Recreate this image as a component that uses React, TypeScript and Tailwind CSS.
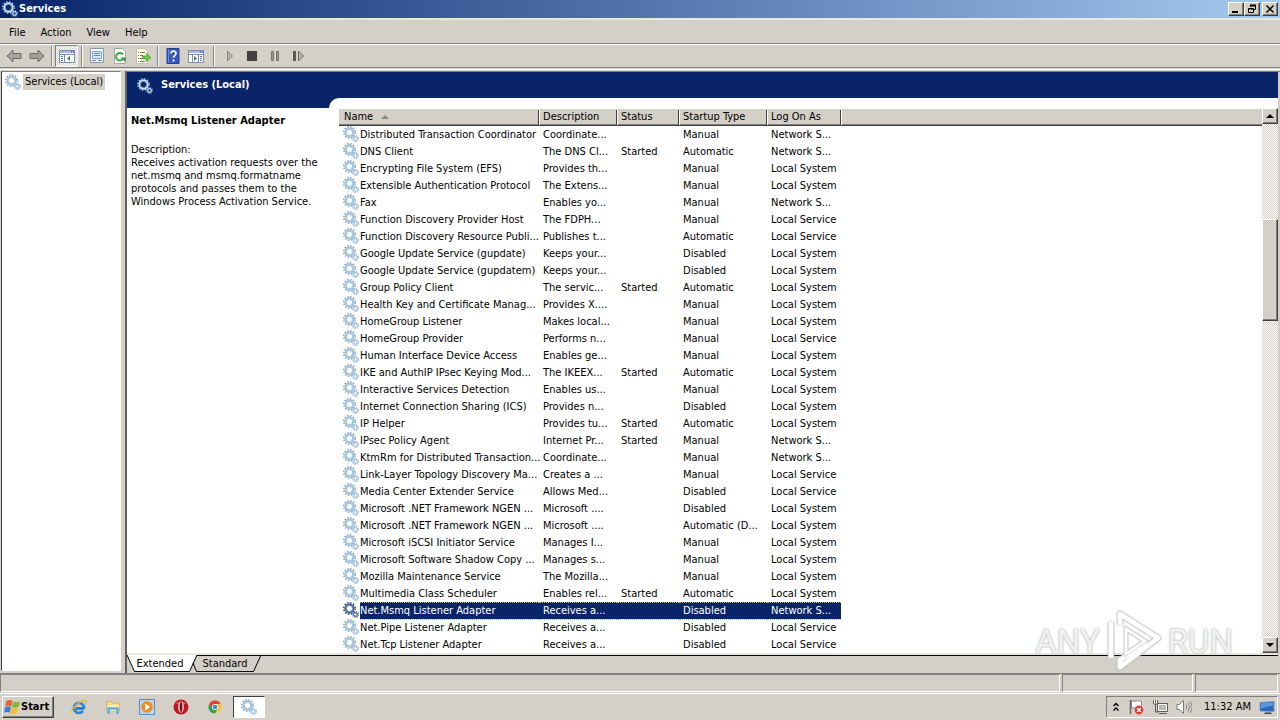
import type { ReactNode } from "react";

type Service = [name: string, description: string, status: string, startup: string, logOn: string];

const SYSTEM = "Local System";
const LOCAL = "Local Service";
const NETWORK = "Network S...";

const services: Service[] = [
  ["Distributed Transaction Coordinator", "Coordinate...", "", "Manual", NETWORK],
  ["DNS Client", "The DNS Cl...", "Started", "Automatic", NETWORK],
  ["Encrypting File System (EFS)", "Provides th...", "", "Manual", SYSTEM],
  ["Extensible Authentication Protocol", "The Extens...", "", "Manual", SYSTEM],
  ["Fax", "Enables yo...", "", "Manual", NETWORK],
  ["Function Discovery Provider Host", "The FDPH...", "", "Manual", LOCAL],
  ["Function Discovery Resource Publi...", "Publishes t...", "", "Automatic", LOCAL],
  ["Google Update Service (gupdate)", "Keeps your...", "", "Disabled", SYSTEM],
  ["Google Update Service (gupdatem)", "Keeps your...", "", "Disabled", SYSTEM],
  ["Group Policy Client", "The servic...", "Started", "Automatic", SYSTEM],
  ["Health Key and Certificate Manag...", "Provides X....", "", "Manual", SYSTEM],
  ["HomeGroup Listener", "Makes local...", "", "Manual", SYSTEM],
  ["HomeGroup Provider", "Performs n...", "", "Manual", LOCAL],
  ["Human Interface Device Access", "Enables ge...", "", "Manual", SYSTEM],
  ["IKE and AuthIP IPsec Keying Mod...", "The IKEEX...", "Started", "Automatic", SYSTEM],
  ["Interactive Services Detection", "Enables us...", "", "Manual", SYSTEM],
  ["Internet Connection Sharing (ICS)", "Provides n...", "", "Disabled", SYSTEM],
  ["IP Helper", "Provides tu...", "Started", "Automatic", SYSTEM],
  ["IPsec Policy Agent", "Internet Pr...", "Started", "Manual", NETWORK],
  ["KtmRm for Distributed Transaction...", "Coordinate...", "", "Manual", NETWORK],
  ["Link-Layer Topology Discovery Ma...", "Creates a ...", "", "Manual", LOCAL],
  ["Media Center Extender Service", "Allows Med...", "", "Disabled", LOCAL],
  ["Microsoft .NET Framework NGEN ...", "Microsoft ....", "", "Disabled", SYSTEM],
  ["Microsoft .NET Framework NGEN ...", "Microsoft ....", "", "Automatic (D...", SYSTEM],
  ["Microsoft iSCSI Initiator Service", "Manages I...", "", "Manual", SYSTEM],
  ["Microsoft Software Shadow Copy ...", "Manages s...", "", "Manual", SYSTEM],
  ["Mozilla Maintenance Service", "The Mozilla...", "", "Manual", SYSTEM],
  ["Multimedia Class Scheduler", "Enables rel...", "Started", "Automatic", SYSTEM],
  ["Net.Msmq Listener Adapter", "Receives a...", "", "Disabled", NETWORK],
  ["Net.Pipe Listener Adapter", "Receives a...", "", "Disabled", LOCAL],
  ["Net.Tcp Listener Adapter", "Receives a...", "", "Disabled", LOCAL],
];

const selected = "Net.Msmq Listener Adapter";

const raised = "border border-t-white border-l-white border-r-[#404040] border-b-[#404040] bg-[#d4d0c8] shadow-[inset_-1px_-1px_0_#808080]";
const sunken = "border border-t-[#808080] border-l-[#808080] border-r-white border-b-white";
const dither = "bg-[repeating-conic-gradient(#ffffff_0_25%,#d4d0c8_0_50%)] bg-[length:2px_2px]";

const Gears = ({ ring = "#a8c5de", edge = "#7ba4c6" }: { ring?: string; edge?: string }) => (
  <svg width="16" height="16" viewBox="0 0 16 16" fill="none" className="shrink-0">
    <circle cx="6.5" cy="6.5" r="5.7" stroke={edge} strokeWidth="1.6" strokeDasharray="1.4 1.58" />
    <circle cx="6.5" cy="6.5" r="4.2" stroke={ring} strokeWidth="2" />
    <circle cx="6.5" cy="6.5" r="3.1" stroke={edge} strokeWidth="0.6" />
    <circle cx="12.5" cy="12.5" r="2.8" stroke={edge} strokeWidth="1.2" strokeDasharray="1.1 1.1" />
    <circle cx="12.5" cy="12.5" r="1.8" stroke={ring} strokeWidth="1.3" />
  </svg>
);

const Icon = ({ children }: { children: ReactNode }) => (
  <svg width="16" height="16" viewBox="0 0 16 16" fill="none" className="shrink-0">
    {children}
  </svg>
);

const ToolButton = ({ label, pressed, children }: { label: string; pressed?: boolean; children: ReactNode }) => (
  <button
    aria-label={label}
    className={`flex h-[22px] w-[23px] items-center justify-center ${pressed ? `${sunken} ${dither}` : ""}`}
  >
    <Icon>{children}</Icon>
  </button>
);

const Divider = () => (
  <div className="flex w-[7px] justify-center">
    <div className="h-5 w-0.5 border-l border-l-[#808080] border-r border-r-white" />
  </div>
);

const ARROW = "M1 8 L7 2 V5.5 H15 V10.5 H7 V14 Z";

const Toolbar = () => (
  <div className="flex h-6 items-center border-t border-t-white border-b border-b-[#808080] pl-0.5">
    <ToolButton label="Back">
      <path d={ARROW} fill="#a3a19c" stroke="#6b6a67" />
    </ToolButton>
    <ToolButton label="Forward">
      <path d={ARROW} fill="#a3a19c" stroke="#6b6a67" transform="rotate(180 8 8)" />
    </ToolButton>
    <Divider />
    <ToolButton label="Show or hide console tree" pressed>
      <path d="M0.5 2.5h15v12h-15z" fill="#fff" stroke="#7d8dab" />
      <path d="M1 3h14v2H1z" fill="#a9bbdc" />
      <path d="M12 4h1M14 4h1" stroke="#1d3d85" />
      <path d="M0.5 6.5h15M5.5 7v8" stroke="#7d8dab" />
      <path d="M2 8.5h2M2 10.5h2M2 12.5h2" stroke="#4c78c0" />
      <path d="M11 8v5l-3-2.5z" fill="#2f9a2f" />
    </ToolButton>
    <Divider />
    <ToolButton label="Properties">
      <path d="M1.5 0.5h13v14h-13z" fill="#f4f8fb" stroke="#8a98a5" />
      <path d="M3.5 3.5h9v7h-9z" fill="#dceaf5" stroke="#7fa3c3" />
      <path d="M5 5.5h6M5 7.5h6M3 12.5h4M9 12.5h4" stroke="#5b88b5" />
    </ToolButton>
    <ToolButton label="Refresh">
      <path d="M2.5 0.5h8l3 3v12h-11z" fill="#fafcfa" stroke="#a1a9a1" />
      <path d="M11.3 10.4A3.8 3.8 0 1 1 11 6.5" stroke="#3da742" strokeWidth="2" />
      <path d="M8.5 9.5h5v4.5z" fill="#2c9433" />
    </ToolButton>
    <ToolButton label="Export list">
      <path d="M1.5 0.5h8l3 3v12h-11z" fill="#fdfbe7" stroke="#c5c1ab" />
      <path d="M3 4.5h1M5 4.5h5M3 7.5h1M5 7.5h3M3 10.5h1M5 10.5h3M3 13.5h1M5 13.5h5" stroke="#77756c" />
      <path d="M7.5 8h4V5.500l4.5 4-4.5 4v-2.500h-4z" fill="#66c93e" stroke="#3d9a28" strokeWidth="0.6" />
    </ToolButton>
    <Divider />
    <ToolButton label="Help">
      <path d="M2 0.5h12v15H2z" fill="#3559bd" stroke="#233f92" />
      <path d="M3.500 1v14" stroke="#6c8ae0" />
      <path d="M6 5.500c0-3.200 5-3.200 5-.3 0 2-2.500 2.200-2.500 4.600M8.500 11.500v2" stroke="#fff" strokeWidth="1.7" />
    </ToolButton>
    <ToolButton label="Show or hide action pane">
      <path d="M0.5 2.500h15v12h-15z" fill="#fff" stroke="#7d8dab" />
      <path d="M1 3h14v2H1z" fill="#a9bbdc" />
      <path d="M12 4h1M14 4h1" stroke="#1d3d85" />
      <path d="M0.5 6.500h15M10.500 7v8M4.500 7v8" stroke="#7d8dab" />
      <path d="M12 8.500h2M12 10.500h2M12 12.500h2" stroke="#4c78c0" />
      <path d="M6 8v5l3-2.500z" fill="#2f9a2f" />
    </ToolButton>
    <div className="flex items-center pl-[3px]">
      <Divider />
      <ToolButton label="Start service">
        <path d="M6.500 3v10l5-5z" fill="#b3b1ab" stroke="#85837e" />
      </ToolButton>
      <ToolButton label="Stop service">
        <path d="M3 3h10v10H3z" fill="#444240" />
      </ToolButton>
      <ToolButton label="Pause service">
        <path d="M4.500 3.500h2v9h-2zM9.500 3.500h2v9h-2z" fill="#999791" stroke="#76746f" />
      </ToolButton>
      <ToolButton label="Restart service">
        <path d="M3 3h3v10H3z" fill="#595753" />
        <path d="M8.500 3v10l5-5z" fill="#b3b1ab" stroke="#76746f" />
      </ToolButton>
    </div>
  </div>
);

const WindowButton = ({ label, children }: { label: string; children: ReactNode }) => (
  <button aria-label={label} className={`flex h-[14px] w-4 items-center justify-center ${raised}`}>
    <svg width="10" height="10" viewBox="0 0 10 10" fill="none" stroke="#000">
      {children}
    </svg>
  </button>
);

const TitleBar = () => (
  <header className="flex h-[18px] items-center bg-linear-to-r from-[#0a246a] to-[#a6caf0] px-0.5">
    <Gears ring="#c7def2" edge="#8fb7dc" />
    <h1 className="grow pl-px text-[11px] font-bold text-white">Services</h1>
    <WindowButton label="Minimize">
      <path d="M1 8h6" strokeWidth="2" />
    </WindowButton>
    <WindowButton label="Restore">
      <path d="M3.500 3V1.500h5v4H7" />
      <path d="M3 1.500h6" strokeWidth="2" />
      <path d="M1.500 4.500h5v4h-5zM1 5h6" />
    </WindowButton>
    <div className="w-0.5" />
    <WindowButton label="Close">
      <path d="M1.500 1.500l7 7M8.500 1.500l-7 7" strokeWidth="1.500" />
    </WindowButton>
  </header>
);

const MenuBar = () => (
  <nav className="flex h-[26px] items-center border-b border-b-[#808080] pt-1 pl-px shadow-[inset_0_2px_0_#e9e7e3]">
    {["File", "Action", "View", "Help"].map((item) => (
      <button key={item} className="pr-[7px] pl-2">
        {item}
      </button>
    ))}
  </nav>
);

const columns = ["Name", "Description", "Status", "Startup Type", "Log On As"];

const ServiceTable = () => (
  <table className="w-full table-fixed border-collapse self-start whitespace-nowrap">
    <colgroup>
      <col className="w-[21px]" />
      <col className="w-[179px]" />
      <col className="w-[78px]" />
      <col className="w-[62px]" />
      <col className="w-[88px]" />
      <col className="w-[74px]" />
      <col />
    </colgroup>
    <thead>
      <tr className="h-[18px] bg-[#d4d0c8] shadow-[inset_0_1px_0_#ffffff,inset_0_-1px_0_#404040,inset_0_-2px_0_#808080]">
        {columns.map((column, i) => (
          <th key={column} colSpan={i === 0 ? 2 : 1} className="p-0 font-normal">
            <button
              className={`flex h-[15px] w-full items-center border-r border-r-[#404040] shadow-[1px_0_0_#ffffff] ${i === 0 ? "pl-[5px]" : "pl-1"}`}
            >
              {column}
              {i === 0 && (
                <svg width="8" height="4" viewBox="0 0 8 4" className="ml-2">
                  <path d="M0 4L4 0l4 4z" fill="#8c8983" />
                </svg>
              )}
            </button>
          </th>
        ))}
        <th className="p-0" />
      </tr>
    </thead>
    <tbody>
      {services.map(([name, ...rest], i) => {
        const active = name === selected;
        const cell = active ? "bg-[#0a246a] text-white border-y border-dotted border-[#c9b477]" : "";
        return (
          <tr key={i} className="h-[17px]">
            <td className="p-0 pl-1 align-top">
              {active ? <Gears ring="#526f9f" edge="#2c4377" /> : <Gears />}
            </td>
            <td className={`p-0 leading-[15px] ${cell}`}>{name}</td>
            {rest.map((text, j) => (
              <td key={j} className={`p-0 pl-1 leading-[15px] ${cell}`}>
                {text}
              </td>
            ))}
            <td className="p-0" />
          </tr>
        );
      })}
    </tbody>
  </table>
);

const ScrollArrow = ({ label, path }: { label: string; path: string }) => (
  <button aria-label={label} className={`flex h-4 shrink-0 items-center justify-center ${raised}`}>
    <svg width="8" height="4" viewBox="0 0 8 4">
      <path d={path} />
    </svg>
  </button>
);

const ScrollBar = () => (
  <div className={`flex w-4 shrink-0 flex-col ${dither}`}>
    <ScrollArrow label="Scroll up" path="M0 4L4 0l4 4z" />
    <div className="grow-[95] basis-0" />
    <div className={`grow-[100] basis-0 ${raised}`} />
    <div className="grow-[316] basis-0" />
    <ScrollArrow label="Scroll down" path="M0 0L4 4l4-4z" />
  </div>
);

const Watermark = () => (
  <div className="pointer-events-none absolute right-[47px] bottom-0 flex h-16 items-center gap-[5px] font-['Liberation_Sans_Narrow','Roboto',sans-serif] text-[33px] leading-none text-white/80 [text-shadow:0_0_2px_#b0b0b0,0_0_3px_#cccccc]">
    <span>ANY</span>
    <svg width="58" height="64" viewBox="0 0 58 64" fill="none" className="drop-shadow-[0_0_1px_#b8b8b8]">
      <path d="M6 49V13M15 16V5L53 29L15 58V51L42 34" stroke="#cfcfcf" strokeWidth="6" strokeLinejoin="round" />
      <path d="M6 49V13M15 16V5L53 29L15 58V51L42 34" stroke="#fff" strokeWidth="4.500" strokeLinejoin="round" />
      <path d="M21 20V45L40 32Z" stroke="#d4d4d4" strokeWidth="4" />
      <path d="M21 20V45L40 32Z" stroke="#fff" strokeWidth="2.500" />
    </svg>
    <span>RUN</span>
  </div>
);

const Tabs = () => (
  <div className="flex h-[18px] border-t border-t-black bg-[#d4d0c8]">
    <button className="relative -mt-px flex h-[18px] w-[70px] items-center justify-center">
      <svg className="absolute inset-0" width="70" height="18" viewBox="0 0 70 18">
        <path d="M0 0L7.500 16.500H62.500L70 0" fill="#fff" stroke="#000" />
        <path d="M1 0h68" stroke="#fff" strokeWidth="2" />
      </svg>
      <span className="relative pr-1">Extended</span>
    </button>
    <button className="relative -mt-px -ml-2 flex h-[18px] w-[72px] items-center justify-center">
      <svg className="absolute inset-0" width="72" height="18" viewBox="0 0 72 18" fill="none">
        <path d="M4 8L7.500 16.500H64.500L72 0" stroke="#000" />
      </svg>
      <span className="relative">Standard</span>
    </button>
  </div>
);

const DetailsPane = () => (
  <section className="relative ml-1 flex min-w-0 grow flex-col border-t border-t-[#808080] border-l-2 border-l-[#606060] pr-0.5">
    <div className="flex h-9 bg-[#0a246a]">
      <div className="flex w-[202px] items-start gap-2 pt-1.5 pl-[10px]">
        <Gears ring="#c7def2" edge="#8fb7dc" />
        <h2 className="leading-[14px] font-bold text-white">Services (Local)</h2>
      </div>
      <div className="h-[10px] grow self-end rounded-tl-[10px] bg-white" />
    </div>
    <div className="flex grow bg-white">
      <div className="w-[212px] shrink-0 pt-1.5 pl-1 leading-[13px] whitespace-nowrap">
        <h3 className="mb-4 font-bold">{selected}</h3>
        <p>Description:</p>
        <p>
          Receives activation requests over the
          <br />
          net.msmq and msmq.formatname
          <br />
          protocols and passes them to the
          <br />
          Windows Process Activation Service.
        </p>
      </div>
      <ServiceTable />
      <ScrollBar />
    </div>
    <div className="h-0.5 bg-[#e9e7e3]" />
    <Tabs />
    <Watermark />
  </section>
);

const StatusBar = () => (
  <footer className="flex h-5 gap-0.5 border-t border-t-[#808080] pr-0.5 pb-px">
    <div className={`grow ${sunken}`} />
    <div className={`w-[131px] ${sunken}`} />
    <div className={`w-[83px] ${sunken}`} />
  </footer>
);

const TaskButton = ({ label, children }: { label: string; children: ReactNode }) => (
  <button aria-label={label} className="flex h-[22px] w-[34px] items-center justify-center">
    <Icon>{children}</Icon>
  </button>
);

const Taskbar = () => (
  <div className="flex h-[27px] items-center border-t border-t-white px-0.5">
    <button className={`mr-2 flex h-[22px] w-[52px] items-center gap-px pl-px text-[11px] font-bold ${raised}`}>
      <Icon>
        <path d="M2.500 2q3-2 6 0L7.300 7.500q-3-1.500-6 0z" fill="#e8612c" />
        <path d="M9.200 2.500q3 1.500 6.800 0l-1.500 5.500q-3 1.500-6.500 0z" fill="#7dba3c" />
        <path d="M1 8.300q3-1.500 6 0l-1.200 5.500q-3-1.500-5.800 0z" fill="#3f7fd4" />
        <path d="M7.700 8.800q3 1.500 6.500 0l-1.400 5.700q-3 1.500-6.400 0z" fill="#f5c12e" />
      </Icon>
      <span>Start</span>
    </button>
    <TaskButton label="Internet Explorer">
      <path d="M13 9.500H5M13 9.500a5 5 0 1 0-1 2.500" stroke="#2c84cf" strokeWidth="2.800" />
      <path d="M1 14.500C-1 11 8 1.500 14.500 1.500c1.500 1 .5 2.500 0 3.500" stroke="#e8bb3a" strokeWidth="1.300" />
    </TaskButton>
    <TaskButton label="Windows Explorer">
      <path d="M1.500 2.500h5l1 1.500h7v8h-13z" fill="#f5dc83" stroke="#d4b455" />
      <path d="M2 6h12v6H2z" fill="#fbeeb4" />
      <path d="M3.500 15V9.500h9V15" stroke="#62aede" strokeWidth="2.500" />
    </TaskButton>
    <TaskButton label="Media Player">
      <path d="M0.500 0.500h15v15H.5z" fill="#b7d6f3" stroke="#4f91cf" />
      <circle cx="8" cy="8" r="5.800" fill="#f28c1b" />
      <path d="M6.200 4.500v7l5-3.500z" fill="#fff" />
    </TaskButton>
    <TaskButton label="Opera">
      <circle cx="8" cy="8" r="7.500" fill="#bd1721" />
      <path d="M2.500 5a7 7 0 0 1 11 0z" fill="#df5a57" />
      <ellipse cx="8" cy="8" rx="2.800" ry="5.500" fill="#efefef" />
      <ellipse cx="8" cy="8" rx="1.500" ry="5" fill="#851018" />
    </TaskButton>
    <TaskButton label="Chrome">
      <circle cx="8" cy="8" r="6.500" fill="#f4c52c" />
      <path d="M2.370 4.750A6.500 6.500 0 0 1 13.630 4.750L8 5L5.200 9.500z" fill="#dc4437" />
      <path d="M2.370 4.750A6.500 6.500 0 0 0 8 14.500L10.800 9.500H5.200z" fill="#2f9f58" />
      <circle cx="8" cy="8" r="3" fill="#fff" />
      <circle cx="8" cy="8" r="2.300" fill="#4283e8" />
    </TaskButton>
    <button
      aria-label="Services"
      className="ml-px flex h-[22px] w-8 items-center justify-center border border-t-[#404040] border-l-[#404040] border-r-white border-b-white bg-white"
    >
      <Gears />
    </button>
    <div className={`ml-auto flex h-[22px] items-center gap-2 pl-[5px] pr-0.5 ${sunken}`}>
      <button aria-label="Show hidden icons">
        <svg width="8" height="10" viewBox="0 0 8 10" fill="none" stroke="#000" strokeWidth="1.400">
          <path d="M1.500 4L4 1.500L6.500 4M1.500 8.500L4 6L6.500 8.500" />
        </svg>
      </button>
      <Icon>
        <path d="M2.500 1v14" stroke="#6d6b66" strokeWidth="1.500" />
        <path d="M3.500 1.500q3 1.500 5 .5t5 .5v6q-3-1-5 0t-5 0z" fill="#fff" stroke="#85837d" />
        <circle cx="11" cy="11" r="4.500" fill="#d92f2f" stroke="#f3c3c3" strokeWidth="0.600" />
        <path d="M9 9l4 4M13 9l-4 4" stroke="#fff" strokeWidth="1.500" />
      </Icon>
      <Icon>
        <path d="M5.500 4.500h10v8h-10z" fill="#b9b8b3" stroke="#5e5c58" />
        <path d="M6.500 5.500h8v6h-8z" stroke="#fff" />
        <path d="M7 14.500h8" stroke="#5e5c58" />
        <path d="M1 1h5v4H1z" fill="#fff" />
        <path d="M1.500 1v4h4V1M3.500 1v3M3.500 5v8h3" stroke="#5e5c58" />
      </Icon>
      <Icon>
        <path d="M1 5.500h2.500l4-4v13l-4-4H1z" fill="#fff" stroke="#7b7974" />
        <path d="M10 5.500q1.500 2.500 0 5M12 3.500q3 4.500 0 9M14 2q4 6 0 12" stroke="#8a8883" />
      </Icon>
      <time className="pl-1">11:32 AM</time>
      <Icon>
        <path d="M1 3.500l14-1v10l-14-.5z" fill="#2d65b8" stroke="#6a9ad8" strokeWidth="0.800" />
        <path d="M2 4.200l12-.8v3l-12 3z" fill="#5b94da" />
        <path d="M6 13.500h6l1 1.500H5z" fill="#3b4757" />
      </Icon>
    </div>
  </div>
);

export default function App() {
  return (
    <div className="flex min-h-screen flex-col bg-[#d4d0c8] font-['DejaVu_Sans_Condensed','Noto_Sans',sans-serif] text-[11px] leading-[14px] text-black">
      <TitleBar />
      <MenuBar />
      <Toolbar />
      <div className="mt-px mb-px h-px bg-white" />
      <main className="flex grow pl-px">
        <aside className="mb-0.5 w-[120px] shrink-0 border border-t-[#808080] border-l-[#404040] border-r-white border-b-white bg-white">
          <a href="#local" className="flex items-start gap-0.5 pt-0.5 pl-[3px] whitespace-nowrap">
            <Gears />
            <span className="bg-[#d4d0c8] px-0.5 leading-4">Services (Local)</span>
          </a>
        </aside>
        <DetailsPane />
      </main>
      <StatusBar />
      <Taskbar />
    </div>
  );
}
